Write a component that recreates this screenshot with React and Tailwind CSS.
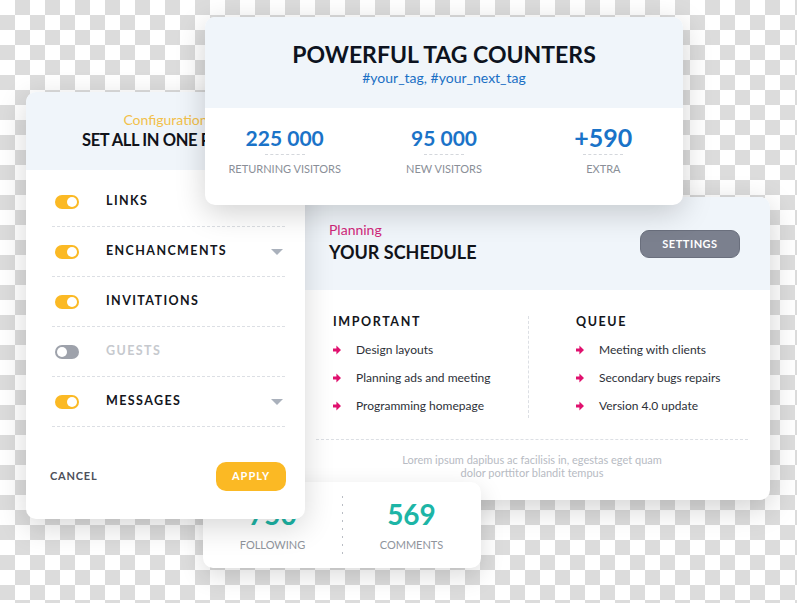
import React from "react";

const FONT = { fontFamily: "Lato, 'Noto Sans', sans-serif" };

function Toggle({ on }) {
  return (
    <span
      className={`flex h-[14px] w-[24px] items-center rounded-full px-[2px] ${
        on ? "justify-end bg-[#fbb924]" : "justify-start bg-[#9ea2ab]"
      }`}
    >
      <span className="h-[10px] w-[10px] rounded-full bg-white" />
    </span>
  );
}

function Caret() {
  return (
    <span className="h-0 w-0 border-x-[6px] border-t-[6px] border-x-transparent border-t-[#aab1bc]" />
  );
}

function Arrow() {
  return (
    <svg width="8" height="10" viewBox="0 0 8 10" className="shrink-0">
      <path d="M0 3.6h3.4V0.4L8 5 3.4 9.6V6.4H0z" fill="#e0106e" />
    </svg>
  );
}

const settings = [
  { label: "LINKS", on: true },
  { label: "ENCHANCMENTS", on: true, caret: true },
  { label: "INVITATIONS", on: true },
  { label: "GUESTS", on: false },
  { label: "MESSAGES", on: true, caret: true },
];

const important = ["Design layouts", "Planning ads and meeting", "Programming homepage"];
const queue = ["Meeting with clients", "Secondary bugs repairs", "Version 4.0 update"];

function Stat({ value, label, big }) {
  return (
    <div className="flex flex-col items-center">
      <span className="flex h-[22px] items-center">
        <span
          className={`font-bold leading-none text-[#1a73c8] ${big ? "text-[25px]" : "text-[21px]"}`}
        >
          {value}
        </span>
      </span>
      <span className="mt-[6px] w-[40px] border-t border-dashed border-[#d4d7dc]" />
      <span className="mt-[8px] text-[11px] leading-none text-[#8a8f98]">{label}</span>
    </div>
  );
}

function TodoList({ title, items }) {
  return (
    <div className="flex flex-col">
      <h3 className="text-[12.5px] font-bold leading-none tracking-[1.6px] text-[#14161c]">{title}</h3>
      <ul className="mt-[13px] flex flex-col gap-[12px]">
        {items.map((t) => (
          <li key={t} className="flex h-[16px] items-center gap-[15px] text-[12px] text-[#2d3038]">
            <Arrow />
            {t}
          </li>
        ))}
      </ul>
    </div>
  );
}

export default function App() {
  return (
    <div
      style={FONT}
      className="relative h-[603px] w-[797px] overflow-hidden bg-white bg-[repeating-conic-gradient(#dcdcdc_0_25%,#ffffff_0_50%)] bg-[length:30px_30px]"
    >
      {/* schedule */}
      <div className="absolute left-[290px] top-[197px] z-10 flex h-[303px] w-[480px] flex-col overflow-hidden rounded-[10px] bg-white shadow-[0_8px_30px_rgba(0,0,0,0.18)]">
        <div className="flex h-[93px] items-start justify-between bg-[#f0f5fa] pl-[39px] pr-[30px] pt-[25px]">
          <div className="flex flex-col">
            <span className="text-[14px] leading-[16px] text-[#d0287a]">Planning</span>
            <span className="mt-[3px] text-[18px] font-bold leading-[22px] text-[#111319]">YOUR SCHEDULE</span>
          </div>
          <button className="mt-[8px] h-[28px] w-[100px] rounded-[9px] border border-[#6a6f7d] bg-[#7b808e] text-[11px] font-bold tracking-[0.5px] text-white">
            SETTINGS
          </button>
        </div>
        <div className="grid grid-cols-[196px_1fr] pl-[43px] pt-[26px]">
          <div className="border-r border-dashed border-[#dcdfe4] pb-[4px]">
            <TodoList title="IMPORTANT" items={important} />
          </div>
          <div className="pl-[47px]">
            <TodoList title="QUEUE" items={queue} />
          </div>
        </div>
        <div className="ml-[26px] mr-[22px] mt-[21px] border-t border-dashed border-[#dcdfe4]" />
        <p className="mt-[13px] pl-[4px] text-center text-[11px] leading-[13px] text-[#b7bbc3]">
          Lorem ipsum dapibus ac facilisis in, egestas eget quam
          <br />
          dolor porttitor blandit tempus
        </p>
      </div>

      {/* following / comments */}
      <div className="absolute left-[203px] top-[482px] z-20 grid h-[86px] w-[278px] grid-cols-2 rounded-[10px] bg-white shadow-[0_8px_24px_rgba(0,0,0,0.14)]">
        <div className="flex flex-col items-center pt-[18px]">
          <span className="text-[28px] font-bold leading-[28px] text-[#1db5a6]">750</span>
          <span className="mt-[11px] text-[11px] leading-none text-[#8f949c]">FOLLOWING</span>
        </div>
        <div className="relative flex flex-col items-center pt-[18px]">
          <span className="absolute left-0 top-[14px] h-[60px] w-px bg-[linear-gradient(#b9bdc4_30%,transparent_0)] bg-[length:1px_8px]" />
          <span className="text-[28px] font-bold leading-[28px] text-[#1db5a6]">569</span>
          <span className="mt-[11px] text-[11px] leading-none text-[#8f949c]">COMMENTS</span>
        </div>
      </div>

      {/* configuration */}
      <div className="absolute left-[26px] top-[92px] z-30 flex h-[427px] w-[279px] flex-col overflow-hidden rounded-[10px] bg-white shadow-[0_8px_30px_rgba(0,0,0,0.16)]">
        <div className="flex h-[78px] flex-col items-center bg-[#f0f5fa] pt-[20px]">
          <span className="text-[14px] leading-[16px] text-[#f2c04a]">Configuration</span>
          <span className="mt-[2px] text-[16.5px] font-bold leading-[20px] tracking-[-0.4px] text-[#111319]">
            SET ALL IN ONE PLACE
          </span>
        </div>
        <ul className="ml-[26px] mr-[20px] mt-[7px] flex flex-col">
          {settings.map((s) => (
            <li
              key={s.label}
              className="flex h-[50px] items-center border-b border-dashed border-[#dcdfe4] pl-[3px] pr-[2px]"
            >
              <Toggle on={s.on} />
              <span
                className={`ml-[27px] flex-1 text-[12.5px] font-bold tracking-[1.4px] ${
                  s.on ? "text-[#14161c]" : "text-[#c6c9ce]"
                }`}
              >
                {s.label}
              </span>
              {s.caret && <Caret />}
            </li>
          ))}
        </ul>
        <div className="ml-[24px] mr-[19px] mt-[35px] flex items-center justify-between">
          <span className="text-[11px] font-bold tracking-[0.8px] text-[#4d5059]">CANCEL</span>
          <button className="h-[29px] w-[70px] rounded-[10px] bg-[#fbb924] text-[11px] font-bold tracking-[1px] text-white">
            APPLY
          </button>
        </div>
      </div>

      {/* tag counters */}
      <div className="absolute left-[205px] top-[17px] z-40 flex h-[188px] w-[478px] flex-col overflow-hidden rounded-[10px] bg-white shadow-[0_8px_30px_rgba(0,0,0,0.18)]">
        <div className="flex h-[91px] flex-col items-center bg-[#f0f5fa] pt-[23px]">
          <h1 className="text-[23px] font-bold leading-[28px] text-[#0d1320]">POWERFUL TAG COUNTERS</h1>
          <span className="mt-[2px] text-[14px] leading-[16px] text-[#1a6fc4]">#your_tag, #your_next_tag</span>
        </div>
        <div className="grid grid-cols-3 pt-[18px]">
          <Stat value="225 000" label="RETURNING VISITORS" />
          <Stat value="95 000" label="NEW VISITORS" />
          <Stat value="+590" label="EXTRA" big />
        </div>
      </div>
    </div>
  );
}
